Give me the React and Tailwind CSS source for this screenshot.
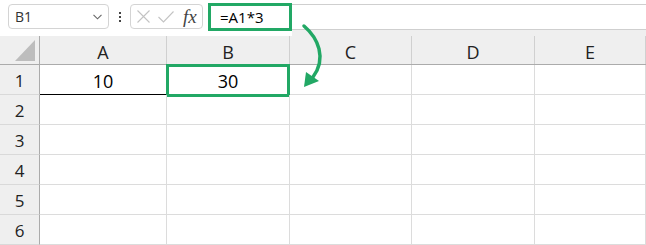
import React from 'react';

const GREEN = '#22a865';

const columns = [
    { key: 'A', width: 'w-[127px]' },
    { key: 'B', width: 'w-[123px]' },
    { key: 'C', width: 'w-[122px]' },
    { key: 'D', width: 'w-[123px]' },
    { key: 'E', width: 'flex-1' },
];

const rows = [1, 2, 3, 4, 5, 6];

const cellValue = (row, col) => {
    if (row === 1 && col === 'A') return '10';
    if (row === 1 && col === 'B') return '30';
    return '';
};

const Toolbar = () => (
    <div className="flex h-[36px] items-start bg-white">
        {/* name box */}
        <div className="ml-[8px] mt-[4px] flex h-[25px] w-[101px] items-center justify-between rounded-[4px] border border-[#d4d4d4] pl-[6px] pr-[6px]">
            <span className="text-[14px] text-[#333]">B1</span>
            <svg width="9" height="6" viewBox="0 0 9 6" className="mt-[1px]">
                <path d="M0.5 0.8 L4.5 4.8 L8.5 0.8" fill="none" stroke="#666" strokeWidth="1.1" />
            </svg>
        </div>

        {/* more dots */}
        <div className="ml-[10px] mt-[12px] flex flex-col gap-[2px]">
            <span className="block h-[2px] w-[2px] bg-[#444]" />
            <span className="block h-[2px] w-[2px] bg-[#444]" />
            <span className="block h-[2px] w-[2px] bg-[#444]" />
        </div>

        {/* cancel / enter / fx */}
        <div className="ml-[9px] mt-[4px] flex h-[25px] w-[73px] items-center rounded-[4px] border border-[#d4d4d4] pl-[6px]">
            <svg width="13" height="13" viewBox="0 0 13 13">
                <path d="M0.5 0.5 L12.5 12.5 M12.5 0.5 L0.5 12.5" stroke="#c3c3c3" strokeWidth="1.1" />
            </svg>
            <svg width="16" height="12" viewBox="0 0 16 12" className="ml-[8px]">
                <path d="M0.5 6 L5.5 11 L15.5 0.5" fill="none" stroke="#c3c3c3" strokeWidth="1.1" />
            </svg>
            <span className="ml-[9px] font-['Liberation_Serif'] text-[19px] italic leading-none text-[#444]">fx</span>
        </div>

        {/* formula bar */}
        <div className="ml-[5px] flex h-[36px] flex-1 flex-col">
            <div className="relative mt-[4px] h-[26px] border-y border-[#cfcfcf] bg-white">
                <div
                    className="absolute left-0 top-[-2px] flex h-[28px] w-[84px] items-center border-[3px] pl-[9px] text-[15px] text-black"
                    style={{ borderColor: GREEN }}
                >
                    =A1*3
                </div>
            </div>
            <div className="flex h-[6px]">
                <div className="w-[84px] bg-white" />
                <div className="flex-1 bg-[#efefef]" />
            </div>
        </div>
    </div>
);

const Sheet = () => (
    <div className="flex flex-col">
        {/* column headers */}
        <div className="flex h-[29px] border-b border-[#ababab] bg-[#efefef]">
            <div className="relative w-[40px] border-r border-[#ababab]">
                <svg width="21" height="21" viewBox="0 0 21 21" className="absolute left-[15px] top-[4px]">
                    <polygon points="20,0 20,21 0,21" fill="#bdbdbd" />
                </svg>
            </div>
            {columns.map((c) => (
                <div
                    key={c.key}
                    className={`${c.width} flex items-center justify-center border-r border-[#d0d0d0] pt-[4px] text-[18px] text-[#222]`}
                >
                    {c.key}
                </div>
            ))}
        </div>

        {rows.map((r) => (
            <div key={r} className="flex h-[30px]">
                <div className="flex w-[40px] items-center justify-center border-b border-r border-b-[#d9d9d9] border-r-[#ababab] bg-[#efefef] pt-[3px] text-[17px] text-[#222]">
                    {r}
                </div>
                {columns.map((c) => {
                    const value = cellValue(r, c.key);
                    const isA1 = r === 1 && c.key === 'A';
                    const isB1 = r === 1 && c.key === 'B';
                    return (
                        <div
                            key={c.key}
                            className={`${c.width} relative flex items-center justify-center border-b border-r border-r-[#dcdcdc] pt-[3px] text-[18px] text-black ${
                                isA1 ? 'border-b-black' : 'border-b-[#dcdcdc]'
                            }`}
                        >
                            {value}
                            {isB1 && (
                                <div
                                    className="absolute left-[-1px] top-[-1px] h-[33px] w-[124px] border-[3px]"
                                    style={{ borderColor: GREEN }}
                                />
                            )}
                        </div>
                    );
                })}
            </div>
        ))}
    </div>
);

export default function App() {
    return (
        <div className="relative h-[245px] w-[646px] overflow-hidden bg-white font-['Open_Sans',sans-serif]">
            <Toolbar />
            <Sheet />

            {/* curved arrow from formula bar to cell */}
            <svg width="646" height="245" className="pointer-events-none absolute left-0 top-0">
                <path d="M304 26 C318 38 327 58 313 77" fill="none" stroke={GREEN} strokeWidth="3.5" strokeLinecap="round" />
                <polygon points="304,87 306,72 319,81" fill={GREEN} />
            </svg>
        </div>
    );
}
